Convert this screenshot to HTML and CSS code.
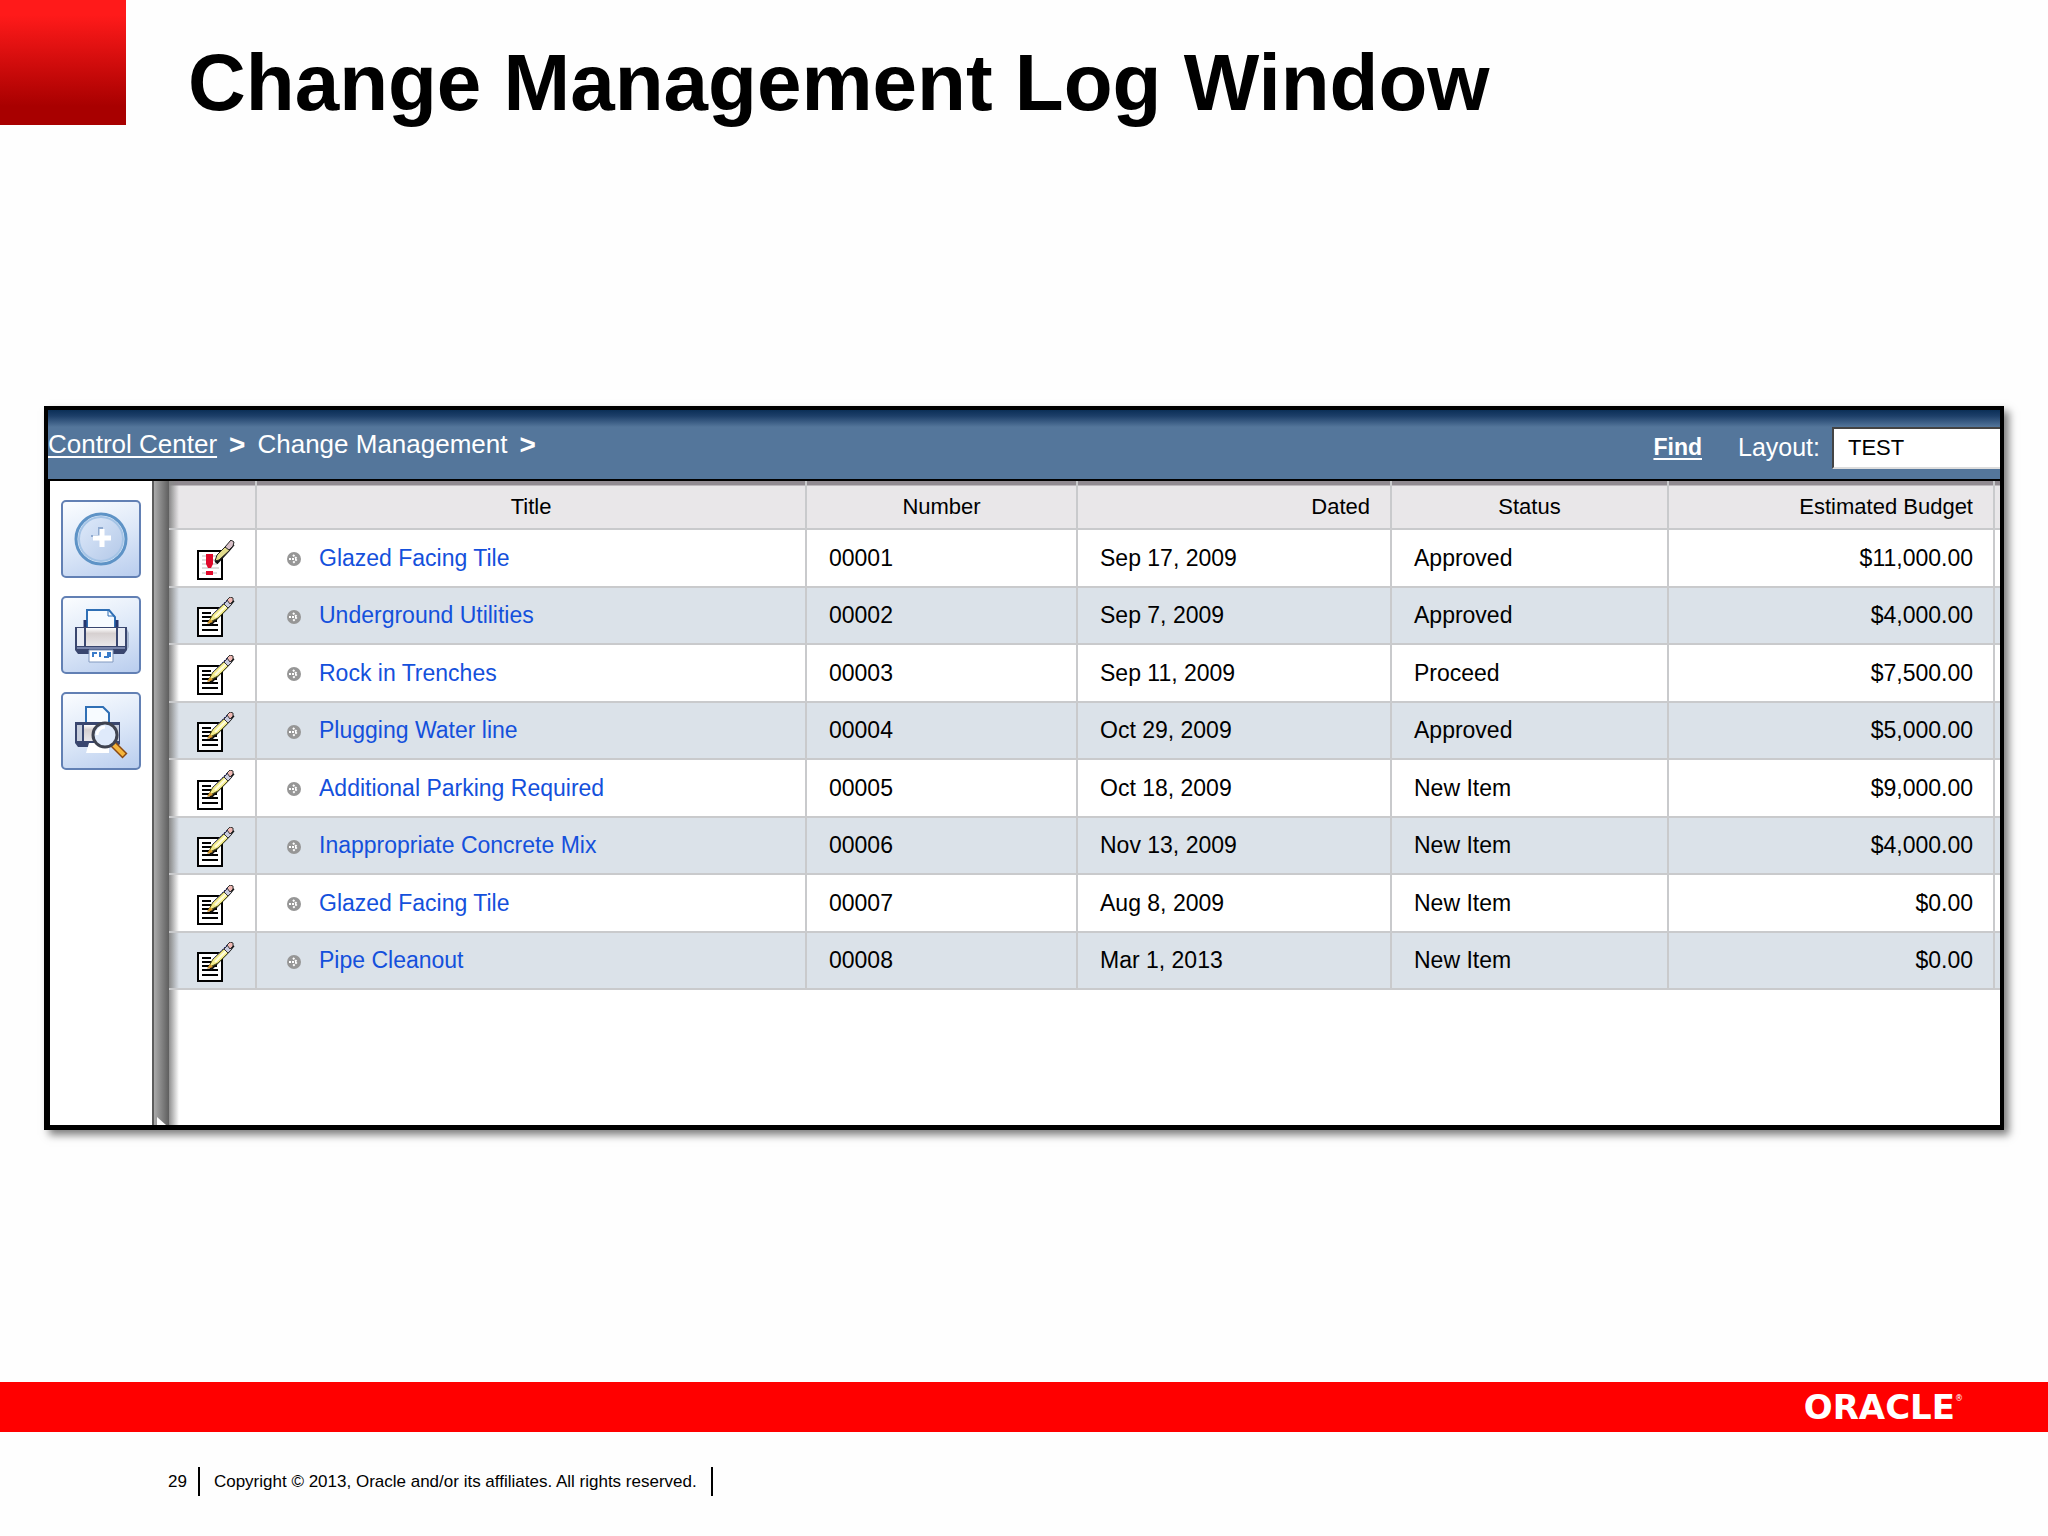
FILE: index.html
```html
<!DOCTYPE html>
<html lang="en">
<head>
  <meta charset="UTF-8">
  <title>Change Management Log Window</title>
  <link rel="stylesheet" href="styles.css">
</head>
<body>

  <!-- Shared icons -->
  <svg class="defs" aria-hidden="true">
    <defs>
      <linearGradient id="metal" x1="0" y1="0" x2="0" y2="1">
        <stop offset="0" stop-color="#fff"/>
        <stop offset="0.3" stop-color="#d6d0d0"/>
        <stop offset="1" stop-color="#e9e7ea"/>
      </linearGradient>
      <linearGradient id="disc" x1="0" y1="0" x2="1" y2="1">
        <stop offset="0" stop-color="#dfeafa"/>
        <stop offset="1" stop-color="#b3c8e8"/>
      </linearGradient>
      <symbol id="pencil" viewBox="0 0 38 41">
        <path d="M13 27 L31 9 L36 3" stroke="#111" stroke-width="4" fill="none"/>
        <path d="M11 26 L16 17 L28 6 L32 10 L21 21 Z" fill="#f3ec8c" stroke="#55551c" stroke-width="1"/>
        <path d="M18 20 L29 9" stroke="#fffde0" stroke-width="2"/>
        <path d="M16 17 L31 2" stroke="#30307a" stroke-width="1" stroke-dasharray="2 1"/>
        <path d="M27 7 L31 3 L35 7 L31 11 Z" fill="#c9cbe0" stroke="#333" stroke-width="1"/>
        <path d="M30 3 L33 0 L36 1 L36 4 L33 7 Z" fill="#f0b9b4" stroke="#333" stroke-width="1"/>
        <path d="M10 27 L13 22 L16 25 Z" fill="#d99a2b"/>
      </symbol>
      <symbol id="edit" viewBox="0 0 38 41">
        <rect x="1" y="11" width="24" height="28" fill="#fff" stroke="#000" stroke-width="2"/>
        <path d="M5 16H14M5 20H17M5 24H20M5 28H21M5 33H21" stroke="#000" stroke-width="2"/>
        <use href="#pencil" width="38" height="41"/>
      </symbol>
      <symbol id="alert" viewBox="0 0 38 41">
        <rect x="1" y="11" width="24" height="28" fill="#fff" stroke="#000" stroke-width="2"/>
        <path d="M5 16H20M5 20H20M5 24H20M5 28H22M5 33H20" stroke="#bbb" stroke-width="1"/>
        <path d="M9 14H16V24L14 28H11L9 24ZM9 31H16V35H9Z" fill="#e0092b"/>
        <path d="M19 23 L31 10 L36 4" stroke="#111" stroke-width="4" fill="none"/>
        <path d="M18 21 L20 15 L29 6 L33 10 L22 20 Z" fill="#e3dd8c" stroke="#222" stroke-width="1"/>
        <path d="M28 7 L34 0 L37 2 L36 6 L32 10 Z" fill="#d8c0c8" stroke="#222" stroke-width="1"/>
      </symbol>
      <symbol id="bullet" viewBox="0 0 14 14">
        <circle cx="7" cy="7" r="7" fill="#969696"/>
        <path d="M2 7H9M6 3L10 7L6 11" stroke="#fff" stroke-width="2" stroke-dasharray="2 1" fill="none"/>
      </symbol>
    </defs>
  </svg>

  <header class="slide-header">
    <div class="red-square"></div>
    <h1>Change Management Log Window</h1>
  </header>

  <main>
    <section class="window">
      <div class="topbar">
        <nav class="breadcrumb">
          <a href="#">Control Center</a>
          <b>&gt;</b>
          <span>Change Management</span>
          <b>&gt;</b>
        </nav>
        <div class="tools">
          <a class="find" href="#">Find</a>
          <label for="layout">Layout:</label>
          <select id="layout">
            <option>TEST</option>
          </select>
        </div>
      </div>

      <div class="content">
        <div class="sidebar">
          <button type="button" aria-label="Add">
            <svg width="54" height="54" viewBox="0 0 54 54">
              <circle cx="27" cy="27" r="25" fill="#e3eefa" stroke="#5e93c6" stroke-width="3"/>
              <circle cx="27" cy="27" r="22" fill="url(#disc)" stroke="#a5c4e6" stroke-width="2"/>
              <path d="M17 24H25V16H29" stroke="#8faad0" stroke-width="2" fill="none"/>
              <path d="M28 17V35M19 26H37" stroke="#fff" stroke-width="5"/>
            </svg>
          </button>
          <button type="button" aria-label="Print">
            <svg width="56" height="56" viewBox="0 0 56 56">
              <path d="M6 46H52L56 40V26L54 22V44Z" fill="#a9b9d3"/>
              <path d="M14 20V3H36L42 10V20" fill="#f7fbff" stroke="#2f6fb5" stroke-width="2"/>
              <path d="M35 3V9H42" fill="none" stroke="#2f6fb5" stroke-width="1"/>
              <path d="M12 13V20M44 13V20" stroke="#26376e" stroke-width="3"/>
              <path d="M2 20H54V43L51 47H5L2 43Z" fill="#39466f"/>
              <rect x="4" y="21" width="7" height="18" fill="#e7ebf4"/>
              <rect x="13" y="21" width="30" height="18" fill="url(#metal)"/>
              <rect x="45" y="21" width="7" height="18" fill="#e7ebf4"/>
              <path d="M4 41H52" stroke="#b8c4e8" stroke-width="1"/>
              <path d="M16 43H40V55H16Z" fill="#fff" stroke="#8199c0" stroke-width="1"/>
              <path d="M20 50V46H24M27 50V45M31 50H35V45M37 45V50" stroke="#3b7cc9" stroke-width="2" fill="none"/>
            </svg>
          </button>
          <button type="button" aria-label="Print preview">
            <svg width="56" height="56" viewBox="0 0 56 56">
              <path d="M13 19V4H30L36 10V19" fill="#f7fbff" stroke="#2f6fb5" stroke-width="2"/>
              <path d="M2 19H47V41L44 44H5L2 40Z" fill="#39466f"/>
              <rect x="4" y="22" width="5" height="16" fill="#c7cedd"/>
              <rect x="11" y="22" width="28" height="16" fill="url(#metal)"/>
              <rect x="41" y="22" width="5" height="16" fill="#c7cedd"/>
              <path d="M16 40H36V50H13Z" fill="#fff"/>
              <path d="M40 41L52 53" stroke="#8b4a12" stroke-width="7"/>
              <path d="M40 41L51 52" stroke="#f5b53c" stroke-width="4"/>
              <circle cx="32" cy="32" r="12" fill="#dfeafb" stroke="#3f4350" stroke-width="3"/>
              <path d="M24 32A8 8 0 0 1 32 24" stroke="#fff" stroke-width="3" fill="none"/>
            </svg>
          </button>
        </div>
        <div class="splitter"></div>

        <div class="log">
          <table>
            <colgroup>
              <col class="col-icon">
              <col>
              <col class="col-number">
              <col class="col-dated">
              <col class="col-status">
              <col class="col-budget">
              <col class="col-edge">
            </colgroup>
            <thead>
              <tr>
                <th></th>
                <th>Title</th>
                <th>Number</th>
                <th class="right">Dated</th>
                <th>Status</th>
                <th class="right">Estimated Budget</th>
                <th></th>
              </tr>
            </thead>
            <tbody>
              <tr>
                <td><a href="#" aria-label="Edit 00001"><svg class="edit"><use href="#alert"/></svg></a></td>
                <td class="title"><svg class="bullet"><use href="#bullet"/></svg><a href="#">Glazed Facing Tile</a></td>
                <td>00001</td>
                <td>Sep 17, 2009</td>
                <td>Approved</td>
                <td class="right">$11,000.00</td>
                <td></td>
              </tr>
              <tr>
                <td><a href="#" aria-label="Edit 00002"><svg class="edit"><use href="#edit"/></svg></a></td>
                <td class="title"><svg class="bullet"><use href="#bullet"/></svg><a href="#">Underground Utilities</a></td>
                <td>00002</td>
                <td>Sep 7, 2009</td>
                <td>Approved</td>
                <td class="right">$4,000.00</td>
                <td></td>
              </tr>
              <tr>
                <td><a href="#" aria-label="Edit 00003"><svg class="edit"><use href="#edit"/></svg></a></td>
                <td class="title"><svg class="bullet"><use href="#bullet"/></svg><a href="#">Rock in Trenches</a></td>
                <td>00003</td>
                <td>Sep 11, 2009</td>
                <td>Proceed</td>
                <td class="right">$7,500.00</td>
                <td></td>
              </tr>
              <tr>
                <td><a href="#" aria-label="Edit 00004"><svg class="edit"><use href="#edit"/></svg></a></td>
                <td class="title"><svg class="bullet"><use href="#bullet"/></svg><a href="#">Plugging Water line</a></td>
                <td>00004</td>
                <td>Oct 29, 2009</td>
                <td>Approved</td>
                <td class="right">$5,000.00</td>
                <td></td>
              </tr>
              <tr>
                <td><a href="#" aria-label="Edit 00005"><svg class="edit"><use href="#edit"/></svg></a></td>
                <td class="title"><svg class="bullet"><use href="#bullet"/></svg><a href="#">Additional Parking Required</a></td>
                <td>00005</td>
                <td>Oct 18, 2009</td>
                <td>New Item</td>
                <td class="right">$9,000.00</td>
                <td></td>
              </tr>
              <tr>
                <td><a href="#" aria-label="Edit 00006"><svg class="edit"><use href="#edit"/></svg></a></td>
                <td class="title"><svg class="bullet"><use href="#bullet"/></svg><a href="#">Inappropriate Concrete Mix</a></td>
                <td>00006</td>
                <td>Nov 13, 2009</td>
                <td>New Item</td>
                <td class="right">$4,000.00</td>
                <td></td>
              </tr>
              <tr>
                <td><a href="#" aria-label="Edit 00007"><svg class="edit"><use href="#edit"/></svg></a></td>
                <td class="title"><svg class="bullet"><use href="#bullet"/></svg><a href="#">Glazed Facing Tile</a></td>
                <td>00007</td>
                <td>Aug 8, 2009</td>
                <td>New Item</td>
                <td class="right">$0.00</td>
                <td></td>
              </tr>
              <tr>
                <td><a href="#" aria-label="Edit 00008"><svg class="edit"><use href="#edit"/></svg></a></td>
                <td class="title"><svg class="bullet"><use href="#bullet"/></svg><a href="#">Pipe Cleanout</a></td>
                <td>00008</td>
                <td>Mar 1, 2013</td>
                <td>New Item</td>
                <td class="right">$0.00</td>
                <td></td>
              </tr>
            </tbody>
          </table>
        </div>
      </div>
    </section>
  </main>

  <footer>
    <div class="brand-bar">
      <span class="logo">ORACLE<sup>®</sup></span>
    </div>
    <div class="legal">
      <span class="page">29</span>
      <span class="copyright">Copyright © 2013, Oracle and/or its affiliates. All rights reserved.</span>
    </div>
  </footer>

</body>
</html>
```
FILE: styles.css
```css
* {
  box-sizing: border-box;
}
body {
  font-family: "Liberation Sans", Arial, sans-serif;
  margin: 0;
  min-height: 100vh;
  display: flex;
  flex-direction: column;
  background: #fefefe;
  color: #000;
}
.defs {
  position: absolute;
  width: 0;
  height: 0;
}

/* Slide heading */
.slide-header {
  display: flex;
  gap: 62px;
}
.red-square {
  width: 126px;
  height: 125px;
  background: linear-gradient(#ff1a1a 12%, #a80000 85%);
}
h1 {
  margin: 37px 0 0;
  font-size: 80px;
  line-height: 92px;
}
main {
  flex: 1;
  padding: 277px 44px 0;
}

/* Application window */
.window {
  border: 4px solid #000;
  border-bottom-width: 5px;
  background: #fff;
  box-shadow: 5px 5px 8px rgba(0, 0, 0, 0.5);
}
.topbar {
  display: flex;
  justify-content: space-between;
  align-items: center;
  height: 71px;
  border-bottom: 2px solid #000;
  background: linear-gradient(#0b2f57, #1d3f69 6px, #54769b 17px);
  color: #fff;
}
.topbar a {
  color: #fff;
}
.breadcrumb {
  display: flex;
  align-items: center;
  gap: 12px;
  font-size: 26px;
}
.breadcrumb a {
  text-underline-offset: 3px;
  text-decoration-thickness: 2px;
}
.breadcrumb b {
  font-size: 28px;
}
.tools {
  display: flex;
  align-items: center;
  padding-top: 6px;
  font-size: 25px;
}
.find {
  margin-right: 36px;
  font-size: 23px;
  font-weight: bold;
  text-decoration-thickness: 2px;
  text-underline-offset: 3px;
}
#layout {
  appearance: none;
  width: 168px;
  height: 42px;
  margin-left: 12px;
  padding: 0 14px;
  border: 2px solid #444;
  border-right: 0;
  border-bottom-color: #ddd;
  border-radius: 0;
  background: #fff;
  color: #000;
  font-family: inherit;
  font-size: 22px;
}

.content {
  display: flex;
  border-left: 2px solid #000;
}
.sidebar {
  display: flex;
  flex-direction: column;
  align-items: center;
  gap: 18px;
  width: 102px;
  padding-top: 19px;
}
.sidebar button {
  display: flex;
  align-items: center;
  justify-content: center;
  width: 80px;
  height: 78px;
  padding: 0;
  border: 2px solid #6280b4;
  border-radius: 5px;
  background: linear-gradient(160deg, #fbfdff, #dde8f8 50%, #b9cdee);
}
.splitter {
  position: relative;
  width: 17px;
  border-left: 2px solid #5c5c5c;
  background: linear-gradient(to right, #aaa, #8c8c8c 40%, #5e5e5e);
}
.splitter::after {
  content: "";
  position: absolute;
  left: 3px;
  bottom: 0;
  border-left: 9px solid #fff;
  border-top: 8px solid transparent;
}

/* Log table */
.log {
  flex: 1;
  padding-bottom: 135px;
  background: linear-gradient(to right, #909090, #fff 10px);
}
table {
  width: 100%;
  table-layout: fixed;
  border-collapse: collapse;
  font-size: 23px;
}
.col-icon { width: 87px; }
.col-number { width: 271px; }
.col-dated { width: 314px; }
.col-status { width: 277px; }
.col-budget { width: 326px; }
.col-edge { width: 6px; }
th, td {
  padding: 0 20px;
  border: 2px solid #c9cacc;
  border-top: 0;
  text-align: left;
}
th:first-child, td:first-child {
  border-left: 0;
}
th:last-child, td:last-child {
  padding: 0;
  border-right: 0;
}
th {
  height: 48px;
  padding-top: 4px;
  background: linear-gradient(#918b91 4px, #e9e7e9 5px);
  font-size: 22px;
  font-weight: normal;
  text-align: center;
}
td {
  height: 58px;
  padding-left: 22px;
  background-color: #fff;
}
tr:nth-child(even) td {
  height: 57px;
  background-color: #dbe2e9;
}
td:first-child {
  padding: 4px 0 0 28px;
  background-image: linear-gradient(to right, #888, rgba(200, 200, 200, 0) 10px);
}
th:first-child {
  background: linear-gradient(to right, #888, rgba(200, 200, 200, 0) 10px), linear-gradient(#918b91 4px, #e9e7e9 5px);
}
.right {
  text-align: right;
}
.title {
  padding-left: 30px;
}
.title a {
  color: #1450dc;
  text-decoration: none;
}
.edit {
  display: block;
  width: 38px;
  height: 41px;
}
.bullet {
  width: 14px;
  height: 14px;
  margin-right: 18px;
  vertical-align: middle;
}

/* Slide footer */
.brand-bar {
  display: flex;
  align-items: center;
  justify-content: flex-end;
  height: 50px;
  padding-right: 85px;
  background: #f00;
  color: #fff;
}
.logo {
  font-family: "DejaVu Sans", sans-serif;
  font-size: 34px;
  font-weight: bold;
  line-height: 50px;
}
.logo sup {
  font-size: 8px;
  font-weight: normal;
  line-height: 8px;
  vertical-align: 18px;
}
.legal {
  display: flex;
  height: 104px;
  padding: 35px 0 0 168px;
  font-size: 17px;
  line-height: 30px;
}
.page {
  padding-right: 11px;
}
.copyright {
  height: 29px;
  padding: 0 14px;
  border: solid #000;
  border-width: 0 2px;
}
```
